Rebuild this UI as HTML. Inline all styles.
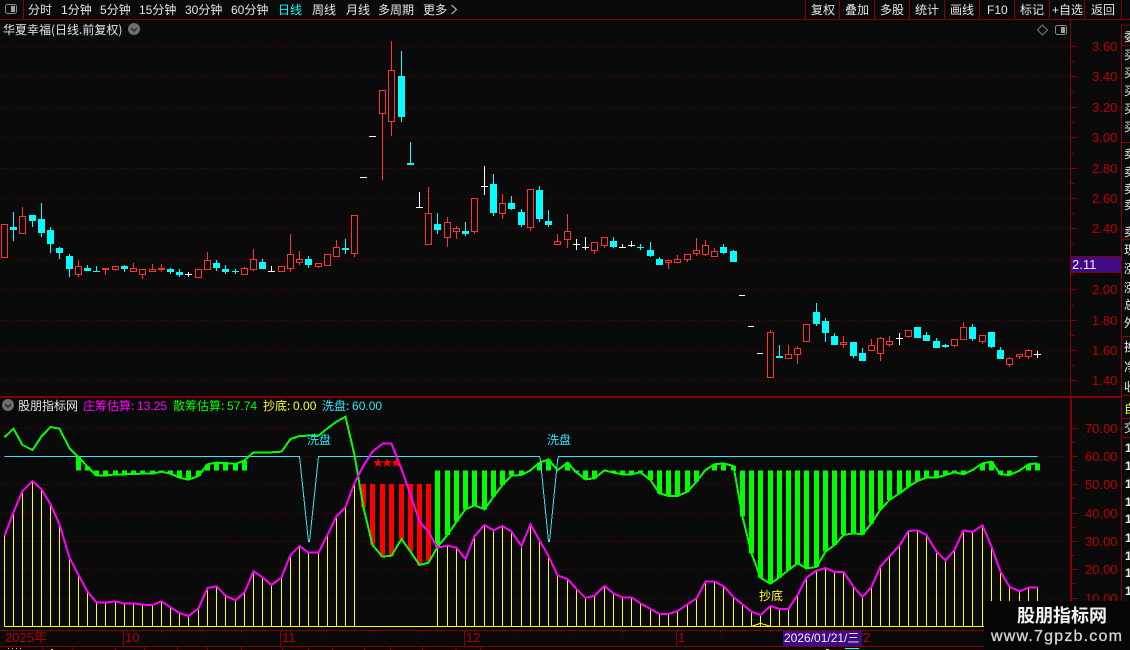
<!DOCTYPE html>
<html lang="zh"><head><meta charset="utf-8"><title>华夏幸福</title>
<style>
html,body{margin:0;padding:0;background:#0a0a0a;width:1130px;height:650px;overflow:hidden}
svg{display:block;position:absolute;left:0;top:0}
text{font-family:"WenQuanYi Zen Hei","Noto Sans CJK SC",sans-serif;font-size:12px;white-space:pre}
.n{font-family:"Liberation Sans",sans-serif}
.t{fill:#e6e6e6}
.a{fill:#b80000;font-family:"Liberation Sans",sans-serif;font-size:13px}
.ln{vector-effect:non-scaling-stroke;fill:none}
</style></head><body>
<svg width="1130" height="650" viewBox="0 0 1130 650" xmlns="http://www.w3.org/2000/svg">
<rect width="1130" height="650" fill="#0a0a0a"/>

<!-- frame lines -->
<g shape-rendering="crispEdges" stroke="#850000" fill="none">
<path d="M0 19.5H1130M23.5 0V19M805.5 0V19M839.5 0V19M874.5 0V19M909.5 0V19M944.5 0V19M979.5 0V19M1014.5 0V19M1049.5 0V19M1084.5 0V19M1121.5 0V19"/>
<path d="M1070.5 19V396M1121.5 25V650M1122 25H1130M1122 45.5H1130M1122 142.5H1130M1122 239.5H1130M1122 336.5H1130M1122 395.5H1130M1122 418.5H1130M1122 437.5H1130"/>
<path d="M0 396.5H1121M0 397.5H1121M1070.5 398V630M1071.5 398V630"/>
<path d="M0 630.5H1121M0 646.5H1121"/>
<path d="M123.5 630V646M280.5 630V646M464.5 630V646M676.5 630V646"/>
<path d="M162.5 631V633M202.5 631V633M241.5 631V633M326.5 631V633M372.5 631V633M418.5 631V633M517.5 631V633M570.5 631V633M623.5 631V633M720.5 631V633M769.5 631V633"/>
<path d="M43 647V650M73 647V650M115.500 647V650M144.500 647V650M177.500 647V650M207.500 647V650M241.500 647V650M282.500 647V650M308.500 647V650M332.500 647V650M364.500 647V650M390.500 647V650M422.500 647V650M456 647V650M480.500 647V650"/>
<!-- axis ticks upper -->
<path d="M1071 46.500H1077M1071 76.500H1077M1071 107.500H1077M1071 137.500H1077M1071 168.500H1077M1071 198.500H1077M1071 228.500H1077M1071 259.500H1077M1071 289.500H1077M1071 320.500H1077M1071 350.500H1077M1071 380.500H1077"/>
<path d="M1071 61.500H1074M1071 92.500H1074M1071 122.500H1074M1071 153.500H1074M1071 183.500H1074M1071 213.500H1074M1071 244.500H1074M1071 274.500H1074M1071 305.500H1074M1071 335.500H1074M1071 365.500H1074"/>
<!-- axis ticks lower -->
<path d="M1072 428.500H1078M1072 456.500H1078M1072 484.500H1078M1072 513.500H1078M1072 541.500H1078M1072 569.500H1078M1072 598.500H1078"/>
<path d="M1072 442.500H1075M1072 470.500H1075M1072 498.500H1075M1072 527.500H1075M1072 555.500H1075M1072 583.500H1075"/>
</g>

<!-- grid -->
<g stroke="#6e0000" stroke-dasharray="1 2.34" shape-rendering="crispEdges" fill="none">
<path d="M0 46.500H1068M0 76.500H1068M0 107.500H1068M0 137.500H1068M0 168.500H1068M0 198.500H1068M0 228.500H1068M0 259.500H1068M0 289.500H1068M0 320.500H1068M0 350.500H1068M0 380.500H1068"/>
<path d="M0 428.500H1068M0 456.500H1068M0 484.500H1068M0 513.500H1068M0 541.500H1068M0 569.500H1068M0 598.500H1068"/>
</g>

<!-- candles: red -->
<g shape-rendering="crispEdges" fill="none" stroke="#ff3232" stroke-width="1">
<path d="M1.5 224.5h6v33h-6zM19.500 216.500h6v17h-6zM22.500 207V216M75.500 266.500h6v8h-6zM78.500 260V266M78.500 275V277M102.500 268.500h6v1h-6zM105.500 270V275M112.500 266.500h6v3h-6zM115.500 270V271M130.500 268.500h6v3h-6zM133.500 263V268M139.500 269.500h6v5h-6zM142.500 275V279M149.500 269.500h6v2h-6zM152.500 264V269M158.500 268.500h6v1h-6zM161.500 264V268M161.500 270V272M195.500 269.500h6v8h-6zM204.500 260.500h6v9h-6zM207.500 252V260M241.500 268.500h6v6h-6zM244.500 267V268M250.500 259.500h6v10h-6zM253.500 249V259M253.500 270V271M278.500 266.500h6v5h-6zM287.500 254.500h6v14h-6zM290.500 234V254M290.500 269V272M296.500 259.500h6v3h-6zM299.500 251V259M299.500 263V265M315.500 263.500h6v3h-6zM318.500 267V268M324.500 254.500h6v11h-6zM333.500 247.500h6v9h-6zM336.500 240V247M351.500 215.500h6v38h-6zM354.500 254V257"/>
<path d="M379.500 90.500h6v23h-6zM382.500 114V180M388.500 70.500h6v51h-6zM391.500 41V70M391.500 122V136M425.500 213.500h6v31h-6zM428.500 187V213M444.500 222.500h6v15h-6zM447.500 217V222M447.500 238V247M453.500 228.500h6v3h-6zM456.500 226V228M456.500 232V239M471.500 198.500h6v33h-6zM474.500 232V234M499.500 203.500h6v10h-6zM502.500 194V203M502.500 214V219M527.500 189.500h6v38h-6zM530.500 228V231M554.500 241.500h6v3h-6zM557.500 234V241M564.500 231.500h6v8h-6zM567.500 214V231M567.500 240V248M591.500 242.500h6v8h-6zM594.500 251V254M601.500 237.500h6v8h-6zM604.500 246V248M665.500 260.500h6v2h-6zM668.500 263V269M674.500 259.500h6v3h-6zM677.500 255V259M684.500 254.500h6v5h-6zM687.500 260V262M693.500 250.500h6v3h-6zM696.500 238V250M696.500 254V256M702.500 245.500h6v9h-6zM705.500 240V245M705.500 255V256M711.500 251.500h6v5h-6zM714.500 248V251"/>
<path d="M767.500 332.500h6v45h-6zM770.500 330V332M785.500 354.500h6v4h-6zM788.500 345V354M794.500 348.500h6v6h-6zM797.500 346V348M797.500 355V364M803.500 324.500h6v17h-6zM840.500 342.500h6v2h-6zM843.500 336V342M843.500 345V348M868.500 345.500h6v5h-6zM871.500 339V345M877.500 338.500h6v15h-6zM880.500 337V338M880.500 354V361M886.500 341.500h6v3h-6zM889.500 336V341M889.500 345V347M905.500 330.500h6v6h-6zM908.500 337V338M951.500 339.500h6v6h-6zM954.500 346V347M960.500 327.500h6v12h-6zM963.500 322V327M979.500 335.500h6v6h-6zM982.500 342V344M1006.500 358.500h6v6h-6zM1009.500 357V358M1009.500 365V367M1016.500 354.500h6v2h-6zM1019.500 357V359M1025.500 350.500h6v6h-6zM1028.500 349V350M1028.500 357V359"/>
</g>
<!-- candles: cyan wicks -->
<path shape-rendering="crispEdges" fill="none" stroke="#00ffff" d="M13.500 212V241M32.500 215V227M41.500 203V237M50.500 227V253M59.500 247V259M69.500 254V277M87.500 265V271M96.500 266V272M93 271.500h7M124.500 265V272M170.500 268V274M179.500 269V277M216.500 260V271M225.500 265V274M235.500 269V274M232 271.500h7M262.500 259V269M308.500 256V268M345.500 239V254M401.500 51V122M410.500 142V165M437.500 213V234M465.500 222V236M493.500 174V216M511.500 196V210M521.500 209V227M539.500 186V222M548.500 210V227M613.500 237V248M640.500 244V250M637 247.500h7M650.500 242V257M659.500 257V265M723.500 244V254M733.500 250V262M779.500 345V358M816.500 303V326M825.500 318V342M834.500 333V345M853.500 342V358M862.500 348V361M917.500 327V338M926.500 332V341M936.500 338V348M945.500 344V348M972.500 324V341M991.500 332V348M1000.500 347V359"/>
<!-- candles: cyan bodies -->
<path shape-rendering="crispEdges" fill="#00ffff" d="M10 227h7v3h-7zM29 215h7v6h-7zM38 219h7v14h-7zM47 230h7v14h-7zM56 248h7v5h-7zM66 256h7v13h-7zM84 268h7v3h-7zM121 266h7v3h-7zM167 269h7v3h-7zM176 272h7v3h-7zM213 263h7v5h-7zM222 269h7v3h-7zM259 262h7v7h-7zM305 259h7v6h-7zM342 248h7v2h-7zM398 76h7v41h-7zM407 163h7v2h-7zM434 224h7v6h-7zM462 231h7v3h-7zM490 184h7v29h-7zM508 203h7v6h-7zM518 212h7v13h-7zM536 190h7v29h-7zM545 221h7v4h-7zM610 241h7v6h-7zM647 250h7v6h-7zM656 259h7v6h-7zM720 247h7v6h-7zM730 251h7v11h-7zM776 356h7v2h-7zM813 312h7v12h-7zM822 321h7v12h-7zM831 336h7v9h-7zM850 342h7v14h-7zM859 353h7v8h-7zM914 327h7v11h-7zM923 335h7v6h-7zM933 341h7v7h-7zM942 345h7v2h-7zM969 327h7v12h-7zM988 332h7v15h-7zM997 350h7v9h-7z"/>
<!-- candles: white -->
<path shape-rendering="crispEdges" fill="none" stroke="#ffffff" d="M188.500 272V277M185 274.500h7M271.500 266V272M268 271.500h7M360 177.500h7M369 136.500h7M419.500 192V208M416 207.500h7M484.500 166V195M481 186.500h7M576.500 239V250M573 244.500h7M585.500 237V250M582 247.500h7M622.500 244V248M619 247.500h7M631.500 241V247M628 245.500h7M739 295.500h6M748 326.500h6M757 353.500h6M899.500 333V345M896 338.500h7M1037.500 351V358M1034 354.500h7"/>

<!-- lower panel (y in 3x zoom units) -->
<g transform="translate(0.5 395) scale(1 0.33333)" shape-rendering="crispEdges">
<!-- yellow bars -->
<path class="ln" stroke="#ffff00" stroke-width="1" d="M4 694V423M13 694V352M22 694V288M32 694V258M41 694V283M50 694V328M59 694V388M69 694V488M78 694V540M87 694V590M96 694V622M105 694V623M115 694V619M124 694V626M133 694V625M142 694V629M152 694V630M161 694V619M170 694V637M179 694V654M188 694V663M198 694V640M207 694V579M216 694V574M225 694V602M235 694V616M244 694V592M253 694V529M262 694V547M271 694V570M281 694V547M290 694V480M299 694V453M308 694V473M318 694V473M327 694V420M336 694V364M345 694V336M354 694V264"/>
<path class="ln" stroke="#ffff00" stroke-width="1" d="M437 694V458M447 694V452M456 694V458M465 694V492M474 694V424M484 694V390M493 694V406M502 694V393M511 694V410M521 694V453M530 694V388M539 694V436M548 694V483M557 694V541M567 694V552M576 694V582M585 694V609M594 694V602M604 694V573M613 694V595M622 694V608M631 694V607M640 694V625M650 694V642M659 694V657M668 694V657M677 694V648M687 694V628M696 694V610M705 694V560M714 694V560M723 694V573M733 694V606M742 694V628M751 694V650M760 694V660M770 694V633M779 694V642M788 694V642M797 694V600M806 694V548M816 694V527M825 694V519M834 694V531M843 694V531M853 694V575M862 694V606M871 694V576M880 694V514M889 694V484M899 694V452M908 694V408M917 694V406M926 694V420M936 694V470M945 694V496M954 694V465M963 694V406M972 694V411M982 694V391M991 694V455M1000 694V530M1009 694V575M1019 694V589M1028 694V578M1037 694V578"/>
<path class="ln" stroke="#ffff00" stroke-width="1" d="M4 694H1037"/>
<path class="ln" stroke="#ffff00" stroke-width="1" d="M751 694L760 685L770 694"/>
<!-- green bars -->
<path class="ln" stroke="#00ff00" stroke-width="5" d="M78 226V186M87 226V215M96 226V242M105 226V242M115 226V238M124 226V238M133 226V237M142 226V236M152 226V236M161 226V230M170 226V236M179 226V248M188 226V254M198 226V243M207 226V208M216 226V203M225 226V204M235 226V207M244 226V196"/>
<path class="ln" stroke="#00ff00" stroke-width="5" d="M437 226V456M447 226V420M456 226V380M465 226V343M474 226V331M484 226V343M493 226V305M502 226V270M511 226V242M521 226V240M530 226V226M539 226V203M548 226V193M567 226V203M576 226V232M585 226V253M594 226V250M604 226V226M613 226V233M622 226V238M631 226V238M640 226V232M650 226V255M659 226V295M668 226V303M677 226V303M687 226V290M696 226V260M705 226V225M714 226V208M723 226V205M733 226V213M742 226V365M751 226V475M760 226V548M770 226V566M779 226V547M788 226V525M797 226V505M806 226V520M816 226V516M825 226V470M834 226V450M843 226V420M853 226V415M862 226V418M871 226V385M880 226V343M889 226V315M899 226V295M908 226V275M917 226V258M926 226V248M936 226V248M945 226V240M954 226V232M963 226V238M972 226V225M982 226V205M991 226V200M1000 226V238M1009 226V240M1019 226V227M1028 226V208M1037 226V205"/>
<!-- red bars -->
<path class="ln" stroke="#ff0000" stroke-width="5" d="M363 267V338M372 267V450M382 267V488M391 267V483M401 267V432M410 267V470M419 267V512M428 267V500"/>
<!-- cyan line -->
<polyline class="ln" stroke="#33e5f5" stroke-width="1" points="4,184 299,184 308,440 309,440 318,184 539,184 540,198 548,440 549,440 557,198 558,184 1037,184"/>
<!-- green line -->
<polyline class="ln" stroke="#00ff00" stroke-width="2" points="4,127 13,101 22,150 32,165 41,124 50,96 59,101 69,160 78,186 87,215 96,242 105,242 115,238 124,238 133,237 142,236 152,236 161,230 170,236 179,248 188,254 198,243 207,208 216,203 225,204 235,207 244,196 253,172 262,172 271,172 281,170 290,132 299,123 308,122 318,122 327,100 336,80 345,65 354,180 363,338 372,450 382,485 391,482 401,432 410,470 419,510 428,503 437,456 447,420 456,380 465,343 474,331 484,343 493,305 502,270 511,242 521,240 530,226 539,203 548,193 557,226 567,203 576,232 585,253 594,250 604,226 613,233 622,238 631,238 640,232 650,255 659,295 668,303 677,303 687,290 696,260 705,225 714,208 723,205 733,213 742,365 751,475 760,548 770,566 779,547 788,525 797,505 806,520 816,516 825,470 834,450 843,420 853,415 862,418 871,385 880,343 889,315 899,295 908,275 917,258 926,248 936,248 945,240 954,232 963,238 972,225 982,205 991,200 1000,238 1009,240 1019,227 1028,208 1037,205"/>
<!-- magenta line -->
<polyline class="ln" stroke="#ff00ff" stroke-width="2" points="4,423 13,352 22,288 32,258 41,283 50,328 59,388 69,488 78,540 87,590 96,622 105,623 115,619 124,626 133,625 142,629 152,630 161,619 170,637 179,654 188,663 198,640 207,579 216,574 225,602 235,616 244,592 253,529 262,547 271,570 281,547 290,480 299,453 308,473 318,473 327,420 336,364 345,336 354,264 363,212 372,170 382,146 391,146 401,222 410,300 419,380 428,410 437,458 447,452 456,458 465,492 474,424 484,390 493,406 502,393 511,410 521,453 530,388 539,436 548,483 557,541 567,552 576,582 585,609 594,602 604,573 613,595 622,608 631,607 640,625 650,642 659,657 668,657 677,648 687,628 696,610 705,560 714,560 723,573 733,606 742,628 751,650 760,660 770,633 779,642 788,642 797,600 806,548 816,527 825,519 834,531 843,531 853,575 862,606 871,576 880,514 889,484 899,452 908,408 917,406 926,420 936,470 945,496 954,465 963,406 972,411 982,391 991,455 1000,530 1009,575 1019,589 1028,578 1037,578"/>
</g>

<!-- stars -->
<polygon fill="#ff0000" points="378,458 379.2,461.400 383,461.400 380,463.500 381.100,467 378,464.900 374.900,467 376,463.500 373,461.400 376.800,461.400"/>
<polygon fill="#ff0000" points="387,458 388.200,461.400 392,461.400 389,463.500 390.100,467 387,464.900 383.900,467 385,463.500 382,461.400 385.800,461.400"/>
<polygon fill="#ff0000" points="396,458 397.200,461.400 401,461.400 398,463.500 399.100,467 396,464.900 392.900,467 394,463.500 391,461.400 394.800,461.400"/>

<!-- top bar icon -->
<rect x="5.500" y="4.500" width="11" height="9" rx="2" fill="none" stroke="#8a8a8a"/>
<rect x="11" y="6" width="4" height="6" fill="#a0a0a0"/>
<!-- top bar text -->
<g class="t">
<text x="28" y="14">分时</text>
<text x="61" y="14"><tspan class="n">1</tspan>分钟</text>
<text x="100" y="14"><tspan class="n">5</tspan>分钟</text>
<text x="139" y="14"><tspan class="n">15</tspan>分钟</text>
<text x="185" y="14"><tspan class="n">30</tspan>分钟</text>
<text x="231" y="14"><tspan class="n">60</tspan>分钟</text>
<text x="278" y="14" style="fill:#00ffff">日线</text>
<text x="312" y="14">周线</text>
<text x="346" y="14">月线</text>
<text x="378" y="14">多周期</text>
<text x="423" y="14">更多</text>
<text x="811" y="14">复权</text>
<text x="845" y="14">叠加</text>
<text x="880" y="14">多股</text>
<text x="915" y="14">统计</text>
<text x="950" y="14">画线</text>
<text x="987" y="14" class="n">F10</text>
<text x="1020" y="14">标记</text>
<text x="1052" y="14"><tspan class="n">+</tspan>自选</text>
<text x="1091" y="14">返回</text>
<text x="3" y="34">华夏幸福(日线.前复权)</text>
</g>
<path d="M451.500 5L456.500 9.500L451.500 14" fill="none" stroke="#d0d0d0"/>

<!-- chevron circles -->
<circle cx="134" cy="29" r="6" fill="#6e6e6e"/>
<path d="M131 28L134 31L137 28" fill="none" stroke="#1a1a1a" stroke-width="1.200"/>
<circle cx="8" cy="405" r="6" fill="#6e6e6e"/>
<path d="M5 404L8 407L11 404" fill="none" stroke="#1a1a1a" stroke-width="1.200"/>

<!-- diamond + panel icon -->
<path d="M1042.500 25L1047.500 30L1042.500 35L1037.500 30Z" fill="none" stroke="#7a7a7a"/>
<rect x="1055.500" y="25.500" width="11" height="9" rx="2" fill="none" stroke="#8a8a8a"/>
<rect x="1061" y="27" width="4" height="6" fill="#a0a0a0"/>

<!-- axis labels upper -->
<text class="a" x="1092" y="51">3.60</text>
<text class="a" x="1092" y="81">3.40</text>
<text class="a" x="1092" y="112">3.20</text>
<text class="a" x="1092" y="142">3.00</text>
<text class="a" x="1092" y="173">2.80</text>
<text class="a" x="1092" y="203">2.60</text>
<text class="a" x="1092" y="233">2.40</text>
<text class="a" x="1092" y="294">2.00</text>
<text class="a" x="1092" y="325">1.80</text>
<text class="a" x="1092" y="355">1.60</text>
<text class="a" x="1092" y="385">1.40</text>
<!-- price box -->
<rect x="1071" y="256.500" width="50" height="15.500" fill="#3f0a85"/>
<path d="M1071 256.500H1121M1071 272.500H1121" stroke="#850000" shape-rendering="crispEdges"/>
<text class="n" x="1072" y="269" style="font-size:13px;fill:#f0f0f0">2.11</text>

<!-- axis labels lower -->
<text class="a" x="1085" y="433">70.00</text>
<text class="a" x="1085" y="461">60.00</text>
<text class="a" x="1085" y="489">50.00</text>
<text class="a" x="1085" y="518">40.00</text>
<text class="a" x="1085" y="546">30.00</text>
<text class="a" x="1085" y="574">20.00</text>
<text class="a" x="1085" y="603">10.00</text>

<!-- lower header -->
<text x="18" y="410" class="t">股朋指标网</text>
<text x="83" y="410" style="fill:#ff00ff">庄筹估算: <tspan class="n">13.25</tspan></text>
<text x="173" y="410" style="fill:#00ff00">散筹估算: <tspan class="n">57.74</tspan></text>
<text x="263" y="410" style="fill:#ffff33">抄底: <tspan class="n">0.00</tspan></text>
<text x="322" y="410" style="fill:#33e5f5">洗盘: <tspan class="n">60.00</tspan></text>

<!-- chart labels -->
<text x="307" y="444" style="fill:#33e5f5">洗盘</text>
<text x="547" y="444" style="fill:#33e5f5">洗盘</text>
<text x="759" y="600" style="fill:#ffff33">抄底</text>

<!-- date axis -->
<text class="a" x="5" y="642">2025年</text>
<text class="a" x="125" y="642">10</text>
<text class="a" x="282" y="642">11</text>
<text class="a" x="466" y="642">12</text>
<text class="a" x="678" y="642">1</text>
<text class="a" x="863" y="642">2</text>
<rect x="783" y="631" width="79" height="15" fill="#3f0a85"/>
<text class="n" x="784" y="642" style="font-size:12px;fill:#f0f0f0">2026/01/21/<tspan style='font-family:"WenQuanYi Zen Hei","Noto Sans CJK SC",sans-serif'>三</tspan></text>

<!-- right strip clipped characters -->
<g style="fill:#f0f0f0;font-size:12px">
<text x="1124" y="41">委</text>
<text x="1124" y="59">买</text><text x="1124" y="77">买</text><text x="1124" y="95">买</text><text x="1124" y="113">买</text><text x="1124" y="131">买</text>
<text x="1124" y="158">卖</text><text x="1124" y="176">卖</text><text x="1124" y="193">卖</text><text x="1124" y="209">卖</text>
<text x="1124" y="236">卖</text>
<text x="1124" y="254">现</text><text x="1124" y="273">涨</text><text x="1124" y="292">涨</text><text x="1124" y="309">总</text><text x="1124" y="327">外</text>
<text x="1124" y="351">换</text><text x="1124" y="371">净</text><text x="1124" y="391">收</text>
<text x="1124" y="413" style="fill:#ffff33">自</text>
<text x="1124" y="432">交</text>
<g class="n" style="font-weight:bold;font-size:13px">
<text class="n" x="1125" y="452">1</text><text class="n" x="1125" y="470">1</text><text class="n" x="1125" y="488">1</text><text class="n" x="1125" y="506">1</text><text class="n" x="1125" y="523">1</text><text class="n" x="1125" y="542">1</text><text class="n" x="1125" y="560">1</text><text class="n" x="1125" y="577">1</text><text class="n" x="1125" y="595">1</text>
</g></g>

<!-- bottom strip fragments -->
<path shape-rendering="crispEdges" stroke="#cfcfcf" d="M8 648.500h1M12 648.500h1M16 648.500h1M20 648.500h1M51 649.500h2M826 649.500h3"/>
<path shape-rendering="crispEdges" stroke="#00ffff" d="M845 648.500h14"/>

<!-- watermark -->
<rect x="984" y="601" width="146" height="49" fill="#050505"/>
<text x="1017" y="622" style='font-family:"Noto Sans CJK SC",sans-serif;font-weight:700;font-size:18px;fill:#f4f4f4'>股朋指标网</text>
<text x="991" y="641" style='font-family:"Liberation Sans",sans-serif;font-size:16px;letter-spacing:1.2px;fill:#d4d4d4;stroke:#d4d4d4;stroke-width:.3px'>www.7gpzb.com</text>
</svg>
</body></html>
